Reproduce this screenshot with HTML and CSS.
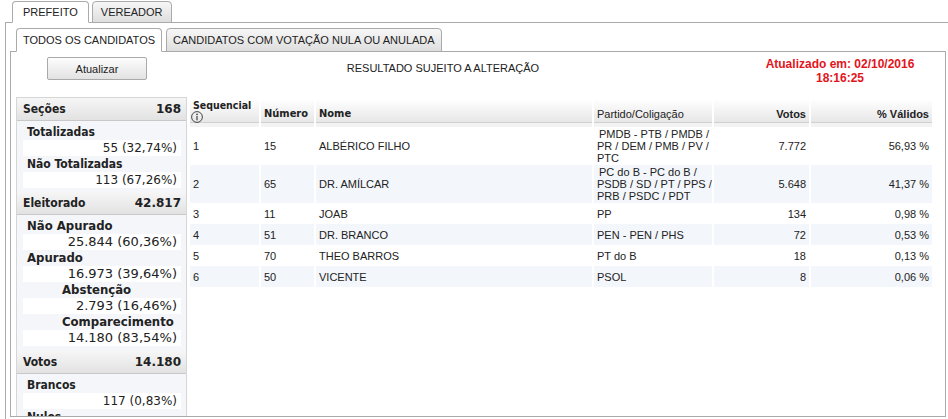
FILE: index.html
```
<!DOCTYPE html>
<html lang="pt-BR">
<head>
<meta charset="utf-8">
<title>Resultado</title>
<link rel="stylesheet" href="styles.css">
</head>
<body>
<div class="tabs outer-tabs">
  <div class="tab active">PREFEITO</div>
  <div class="tab">VEREADOR</div>
</div>
<div class="outer-panel">
  <div class="tabs inner-tabs">
    <div class="tab active">TODOS OS CANDIDATOS</div>
    <div class="tab">CANDIDATOS COM VOTAÇÃO NULA OU ANULADA</div>
  </div>
  <div class="inner-panel">
    <div class="topbar">
      <div class="tb-left"><button class="btn" type="button">Atualizar</button></div>
      <div class="tb-center">RESULTADO SUJEITO A ALTERAÇÃO</div>
      <div class="tb-right">Atualizado em: 02/10/2016<br>18:16:25</div>
    </div>
    <div class="main">
      <aside class="summary">
        <div class="sec-head"><span class="sh-l">Seções</span><span class="sh-v">168</span></div>
        <div class="sec-body">
          <div class="lbl">Totalizadas</div>
          <div class="val">55 (32,74%)</div>
          <div class="lbl">Não Totalizadas</div>
          <div class="val">113 (67,26%)</div>
        </div>
        <div class="sec-head"><span class="sh-l">Eleitorado</span><span class="sh-v">42.817</span></div>
        <div class="sec-body big">
          <div class="lbl">Não Apurado</div>
          <div class="val">25.844 (60,36%)</div>
          <div class="lbl">Apurado</div>
          <div class="val">16.973 (39,64%)</div>
          <div class="lbl sub">Abstenção</div>
          <div class="val">2.793 (16,46%)</div>
          <div class="lbl sub">Comparecimento</div>
          <div class="val">14.180 (83,54%)</div>
        </div>
        <div class="sec-head"><span class="sh-l">Votos</span><span class="sh-v">14.180</span></div>
        <div class="sec-body last">
          <div class="lbl">Brancos</div>
          <div class="val">117 (0,83%)</div>
          <div class="lbl">Nulos</div>
        </div>
      </aside>
      <table class="results">
        <thead>
          <tr>
            <th class="c-seq tah"><span class="seq-t">Sequencial</span><svg class="info" width="12" height="12" viewBox="0 0 12 12"><circle cx="6" cy="6" r="5.4" fill="none" stroke="#333" stroke-width="0.9"/><circle cx="6" cy="3.4" r="0.8" fill="#333"/><rect x="5.45" y="5" width="1.1" height="4.3" fill="#333"/></svg></th>
            <th class="c-num tah">Número</th>
            <th class="c-nome tah">Nome</th>
            <th class="c-part">Partido/Coligação</th>
            <th class="c-votos num-r">Votos</th>
            <th class="c-pct num-r">% Válidos</th>
          </tr>
        </thead>
        <tbody>
          <tr>
            <td>1</td><td>15</td><td>ALBÉRICO FILHO</td>
            <td class="part"><span class="lead">PMDB - PTB / PMDB /</span><br>PR / DEM / PMB / PV /<br>PTC</td>
            <td class="r">7.772</td><td class="r">56,93 %</td>
          </tr>
          <tr>
            <td>2</td><td>65</td><td>DR. AMÍLCAR</td>
            <td class="part"><span class="lead">PC do B - PC do B /</span><br>PSDB / SD / PT / PPS /<br>PRB / PSDC / PDT</td>
            <td class="r">5.648</td><td class="r">41,37 %</td>
          </tr>
          <tr>
            <td>3</td><td>11</td><td>JOAB</td><td class="part">PP</td>
            <td class="r">134</td><td class="r">0,98 %</td>
          </tr>
          <tr>
            <td>4</td><td>51</td><td>DR. BRANCO</td><td class="part">PEN - PEN / PHS</td>
            <td class="r">72</td><td class="r">0,53 %</td>
          </tr>
          <tr>
            <td>5</td><td>70</td><td>THEO BARROS</td><td class="part">PT do B</td>
            <td class="r">18</td><td class="r">0,13 %</td>
          </tr>
          <tr>
            <td>6</td><td>50</td><td>VICENTE</td><td class="part">PSOL</td>
            <td class="r">8</td><td class="r">0,06 %</td>
          </tr>
        </tbody>
      </table>
    </div>
  </div>
</div>
</body>
</html>
```
FILE: styles.css
```
html, body {
  margin: 0;
  padding: 0;
  background: #fff;
  overflow: hidden;
}
body {
  width: 948px;
  height: 419px;
  font-family: "Liberation Sans", Arial, sans-serif;
  font-size: 11px;
  color: #222;
}

/* tabs */
.tabs {
  display: flex;
  align-items: flex-end;
  position: relative;
  z-index: 1;
  margin-bottom: -1px;
}
.outer-tabs {
  padding: 1px 0 0 12px;
  gap: 3px;
}
.inner-tabs {
  margin-top: 5px;
  padding-left: 6px;
  gap: 4px;
}
.tab {
  box-sizing: border-box;
  display: flex;
  align-items: center;
  border: 1px solid #aaa;
  border-radius: 4px 4px 0 0;
  background: linear-gradient(#f7f7f7, #dedede);
  color: #222;
  font-size: 11px;
  white-space: nowrap;
}
.outer-tabs .tab {
  height: 22px;
  padding: 0 8px;
}
.outer-tabs .tab.active {
  padding: 0 10px;
}
.inner-tabs .tab {
  height: 24px;
  padding: 0 6px;
}
.tab.active {
  background: #fff;
  border-bottom-color: #fff;
}

/* panels */
.outer-panel {
  margin-left: 5px;
  width: 960px;
  height: 500px;
  border: 1px solid #aaa;
  padding-left: 4px;
}
.inner-panel {
  box-sizing: border-box;
  width: 936px;
  height: 366px;
  border: 1px solid #aaa;
  padding-top: 5px;
  overflow: hidden;
  background: #fff;
}

/* top bar */
.topbar {
  display: grid;
  grid-template-columns: 179px 506px 1fr;
  height: 40px;
}
.btn {
  margin-left: 36px;
  width: 100px;
  height: 23px;
  border: 1px solid #a9a9a9;
  border-radius: 2px;
  background: linear-gradient(#fdfdfd, #e2e2e2);
  font-family: "Liberation Sans", Arial, sans-serif;
  font-size: 11px;
  color: #222;
  padding: 0;
}
.tb-center {
  text-align: center;
  padding-top: 5px;
  line-height: 13px;
}
.tb-right {
  text-align: center;
  padding-left: 39px;
  color: #e3141b;
  font-weight: bold;
  font-size: 12px;
  line-height: 14px;
}

/* main */
.main {
  display: flex;
  align-items: flex-start;
  padding-left: 5px;
}

/* summary column */
.summary {
  box-sizing: border-box;
  width: 171px;
  flex: none;
  border: 1px solid #d6d6d6;
  background: #f4f6fa;
}
.sec-head {
  box-sizing: border-box;
  height: 23px;
  display: flex;
  align-items: center;
  justify-content: space-between;
  padding: 0 5px 0 6px;
  background: linear-gradient(#f6f6f6, #e2e2e2);
  border-bottom: 1px solid #c8c8c8;
  color: #222;
}
.sh-l {
  font-family: "DejaVu Sans Condensed", "DejaVu Sans", sans-serif;
  font-weight: bold;
  font-size: 12px;
}
.sh-v {
  font-family: "DejaVu Sans", sans-serif;
  font-weight: bold;
  font-size: 12px;
}
.sec-body {
  padding: 3px 5px 4px 6px;
  line-height: 16px;
}
.sec-body.big {
  padding-bottom: 5px;
}
.sec-body.last {
  padding-bottom: 20px;
}
.lbl {
  height: 16px;
  padding-left: 4px;
  font-family: "DejaVu Sans Condensed", "DejaVu Sans", sans-serif;
  font-weight: bold;
  font-size: 12px;
  white-space: nowrap;
}
.lbl.sub {
  padding-left: 39px;
}
.val {
  height: 16px;
  background: #fff;
  text-align: right;
  padding-right: 4px;
  font-family: "DejaVu Sans", sans-serif;
  font-size: 12px;
  white-space: nowrap;
}
.big .lbl {
  font-size: 13px;
}
.big .val {
  font-size: 13px;
}

/* results table */
.results {
  margin: 3px 0 0 1px;
  width: 746px;
  table-layout: fixed;
  border-collapse: separate;
  border-spacing: 2px 0;
  font-size: 11px;
  color: #222;
}
.results th {
  box-sizing: border-box;
  height: 27px;
  padding: 0 3px 7px;
  vertical-align: bottom;
  text-align: left;
  line-height: 12px;
  font-weight: normal;
  white-space: nowrap;
  background: linear-gradient(#fefefe 0, #e7e7e7 22px, #d0d0d0 22px, #d0d0d0 23px, #f3f3f3 23px);
}
.results th.tah {
  font-family: "DejaVu Sans Condensed", "DejaVu Sans", sans-serif;
  font-weight: bold;
}
.results th.num-r {
  text-align: right;
  font-weight: bold;
}
.results th.c-seq {
  vertical-align: top;
  padding-top: 0;
  padding-bottom: 0;
  line-height: 10px;
  font-size: 10.5px;
}
.seq-t {
  display: block;
}
.info {
  display: block;
  margin-top: 1px;
  margin-left: -2px;
}
.c-seq { width: 69px; }
.c-num { width: 53px; }
.c-nome { width: 276px; }
.c-part { width: 118px; }
.c-votos { width: 95px; }

.results td {
  padding: 1px 3px;
  line-height: 12px;
  vertical-align: middle;
  white-space: nowrap;
}
.results td .lead {
  padding-left: 2px;
}
.results tbody tr {
  height: 21px;
}
.results tbody tr:nth-child(even) td {
  background: #f3f6fb;
}
.results td.r {
  text-align: right;
}
```
